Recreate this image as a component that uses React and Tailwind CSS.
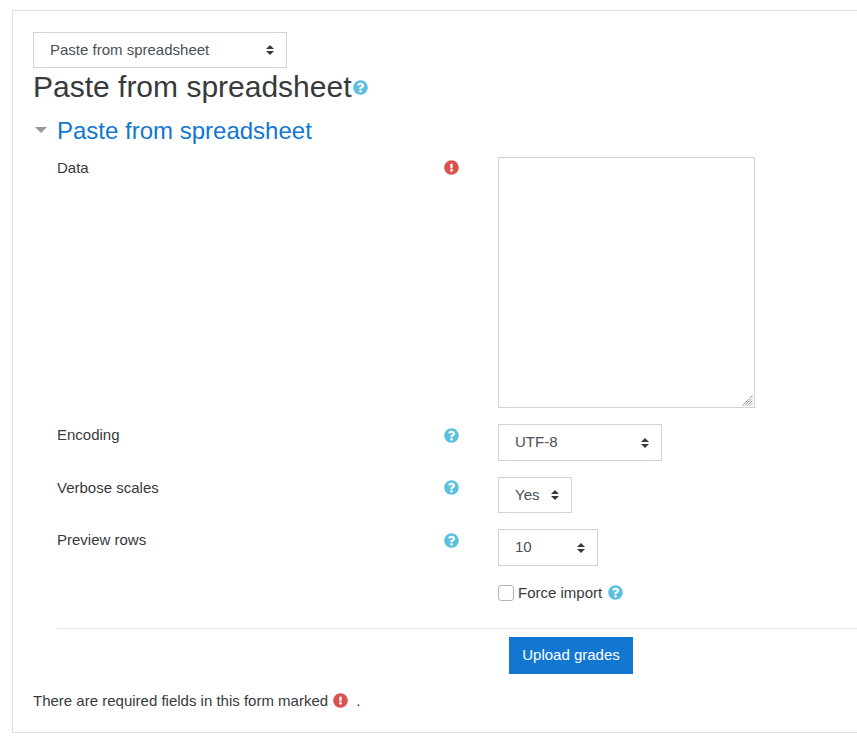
import React from "react";
import { FaQuestionCircle, FaExclamationCircle } from "react-icons/fa";

function Select({ value, width }) {
  return (
    <div className={`flex h-[36.5px] items-center justify-between border border-[#ced4da] bg-white pl-4 pr-[12px] text-[15px] text-[#495057] ${width}`}>
      <span>{value}</span>
      <svg viewBox="0 0 4 5" className="h-[10px] w-[8px] shrink-0 fill-[#343a40]">
        <path d="M2 0L0 2h4zm0 5L0 3h4z" />
      </svg>
    </div>
  );
}

function Help({ className = "" }) {
  return <FaQuestionCircle className={`size-[15px] shrink-0 text-[#5bc0de] ${className}`} />;
}

function Required() {
  return <FaExclamationCircle className="size-[15px] shrink-0 text-[#d9534f]" />;
}

function Row({ label, icon, children }) {
  return (
    <div className="mb-4 grid grid-cols-[387px_54px_1fr]">
      <div className="pt-[1px] leading-[20px] text-[#373a3c]">{label}</div>
      <div className="pt-[3.5px]">{icon}</div>
      <div>{children}</div>
    </div>
  );
}

export default function App() {
  return (
    <div className="h-[749px] w-[857px] overflow-hidden bg-white font-['Liberation_Sans',Arial,sans-serif] text-[15px] text-[#373a3c]">
      <div className="ml-3 mt-[10px] h-[723px] w-[900px] border border-[#dfdfdf] px-5 pt-[20.7px]">
        <Select value="Paste from spreadsheet" width="w-[254px]" />
        <h2 className="mt-[0.8px] flex items-center text-[30px] leading-[36px] font-normal text-[#373a3c]">
          Paste from spreadsheet
          <Help className="ml-[1.5px] mt-[2px]" />
        </h2>
        <div className="mt-[11px] flex items-center">
          <svg viewBox="0 0 12 6" className="ml-[2px] h-[6px] w-[12px] fill-[#999]">
            <path d="M0 0h12L6 6z" />
          </svg>
          <h3 className="ml-[10px] text-[24px] leading-[29px] font-normal text-[#1177d1]">Paste from spreadsheet</h3>
        </div>
        <div className="mt-[12px] pl-6">
          <Row label="Data" icon={<Required />}>
            <div className="relative h-[251.3px] w-[257px]">
              <textarea className="block h-full w-full resize-none rounded-none border border-[#ced4da] bg-white outline-none" />
              <svg viewBox="0 0 11 11" className="absolute bottom-[2px] right-[2px] size-[11px] stroke-[#6f6f6f]" strokeWidth="1" strokeDasharray="1.2 0.5" fill="none">
                <path d="M0.5 10.5L10.5 0.5M3 10.5L10.5 3M5.5 10.5L10.5 5.5M8 10.5L10.5 8" />
              </svg>
            </div>
          </Row>
          <Row label="Encoding" icon={<Help />}>
            <Select value="UTF-8" width="w-[164px]" />
          </Row>
          <Row label="Verbose scales" icon={<Help />}>
            <Select value="Yes" width="w-[74px]" />
          </Row>
          <Row label="Preview rows" icon={<Help />}>
            <Select value="10" width="w-[100px]" />
          </Row>
          <div className="flex h-[22px] items-center pl-[441px]">
            <input type="checkbox" className="mt-[1px] size-4 appearance-none rounded-[3px] border border-[#adb5bd] bg-white" />
            <span className="ml-1">Force import</span>
            <Help className="ml-[5.5px]" />
          </div>
          <hr className="mt-[24.2px] border-t border-[#e5e5e5]" />
          <div className="mt-2 pl-[452px]">
            <button className="h-[37px] w-[124px] bg-[#1177d1] text-[15px] text-white">Upload grades</button>
          </div>
        </div>
        <div className="mt-4 flex items-center leading-[22px]">
          <span>There are required fields in this form marked</span>
          <span className="ml-[4.5px]"><Required /></span>
          <span className="ml-[8.5px]">.</span>
        </div>
      </div>
    </div>
  );
}
